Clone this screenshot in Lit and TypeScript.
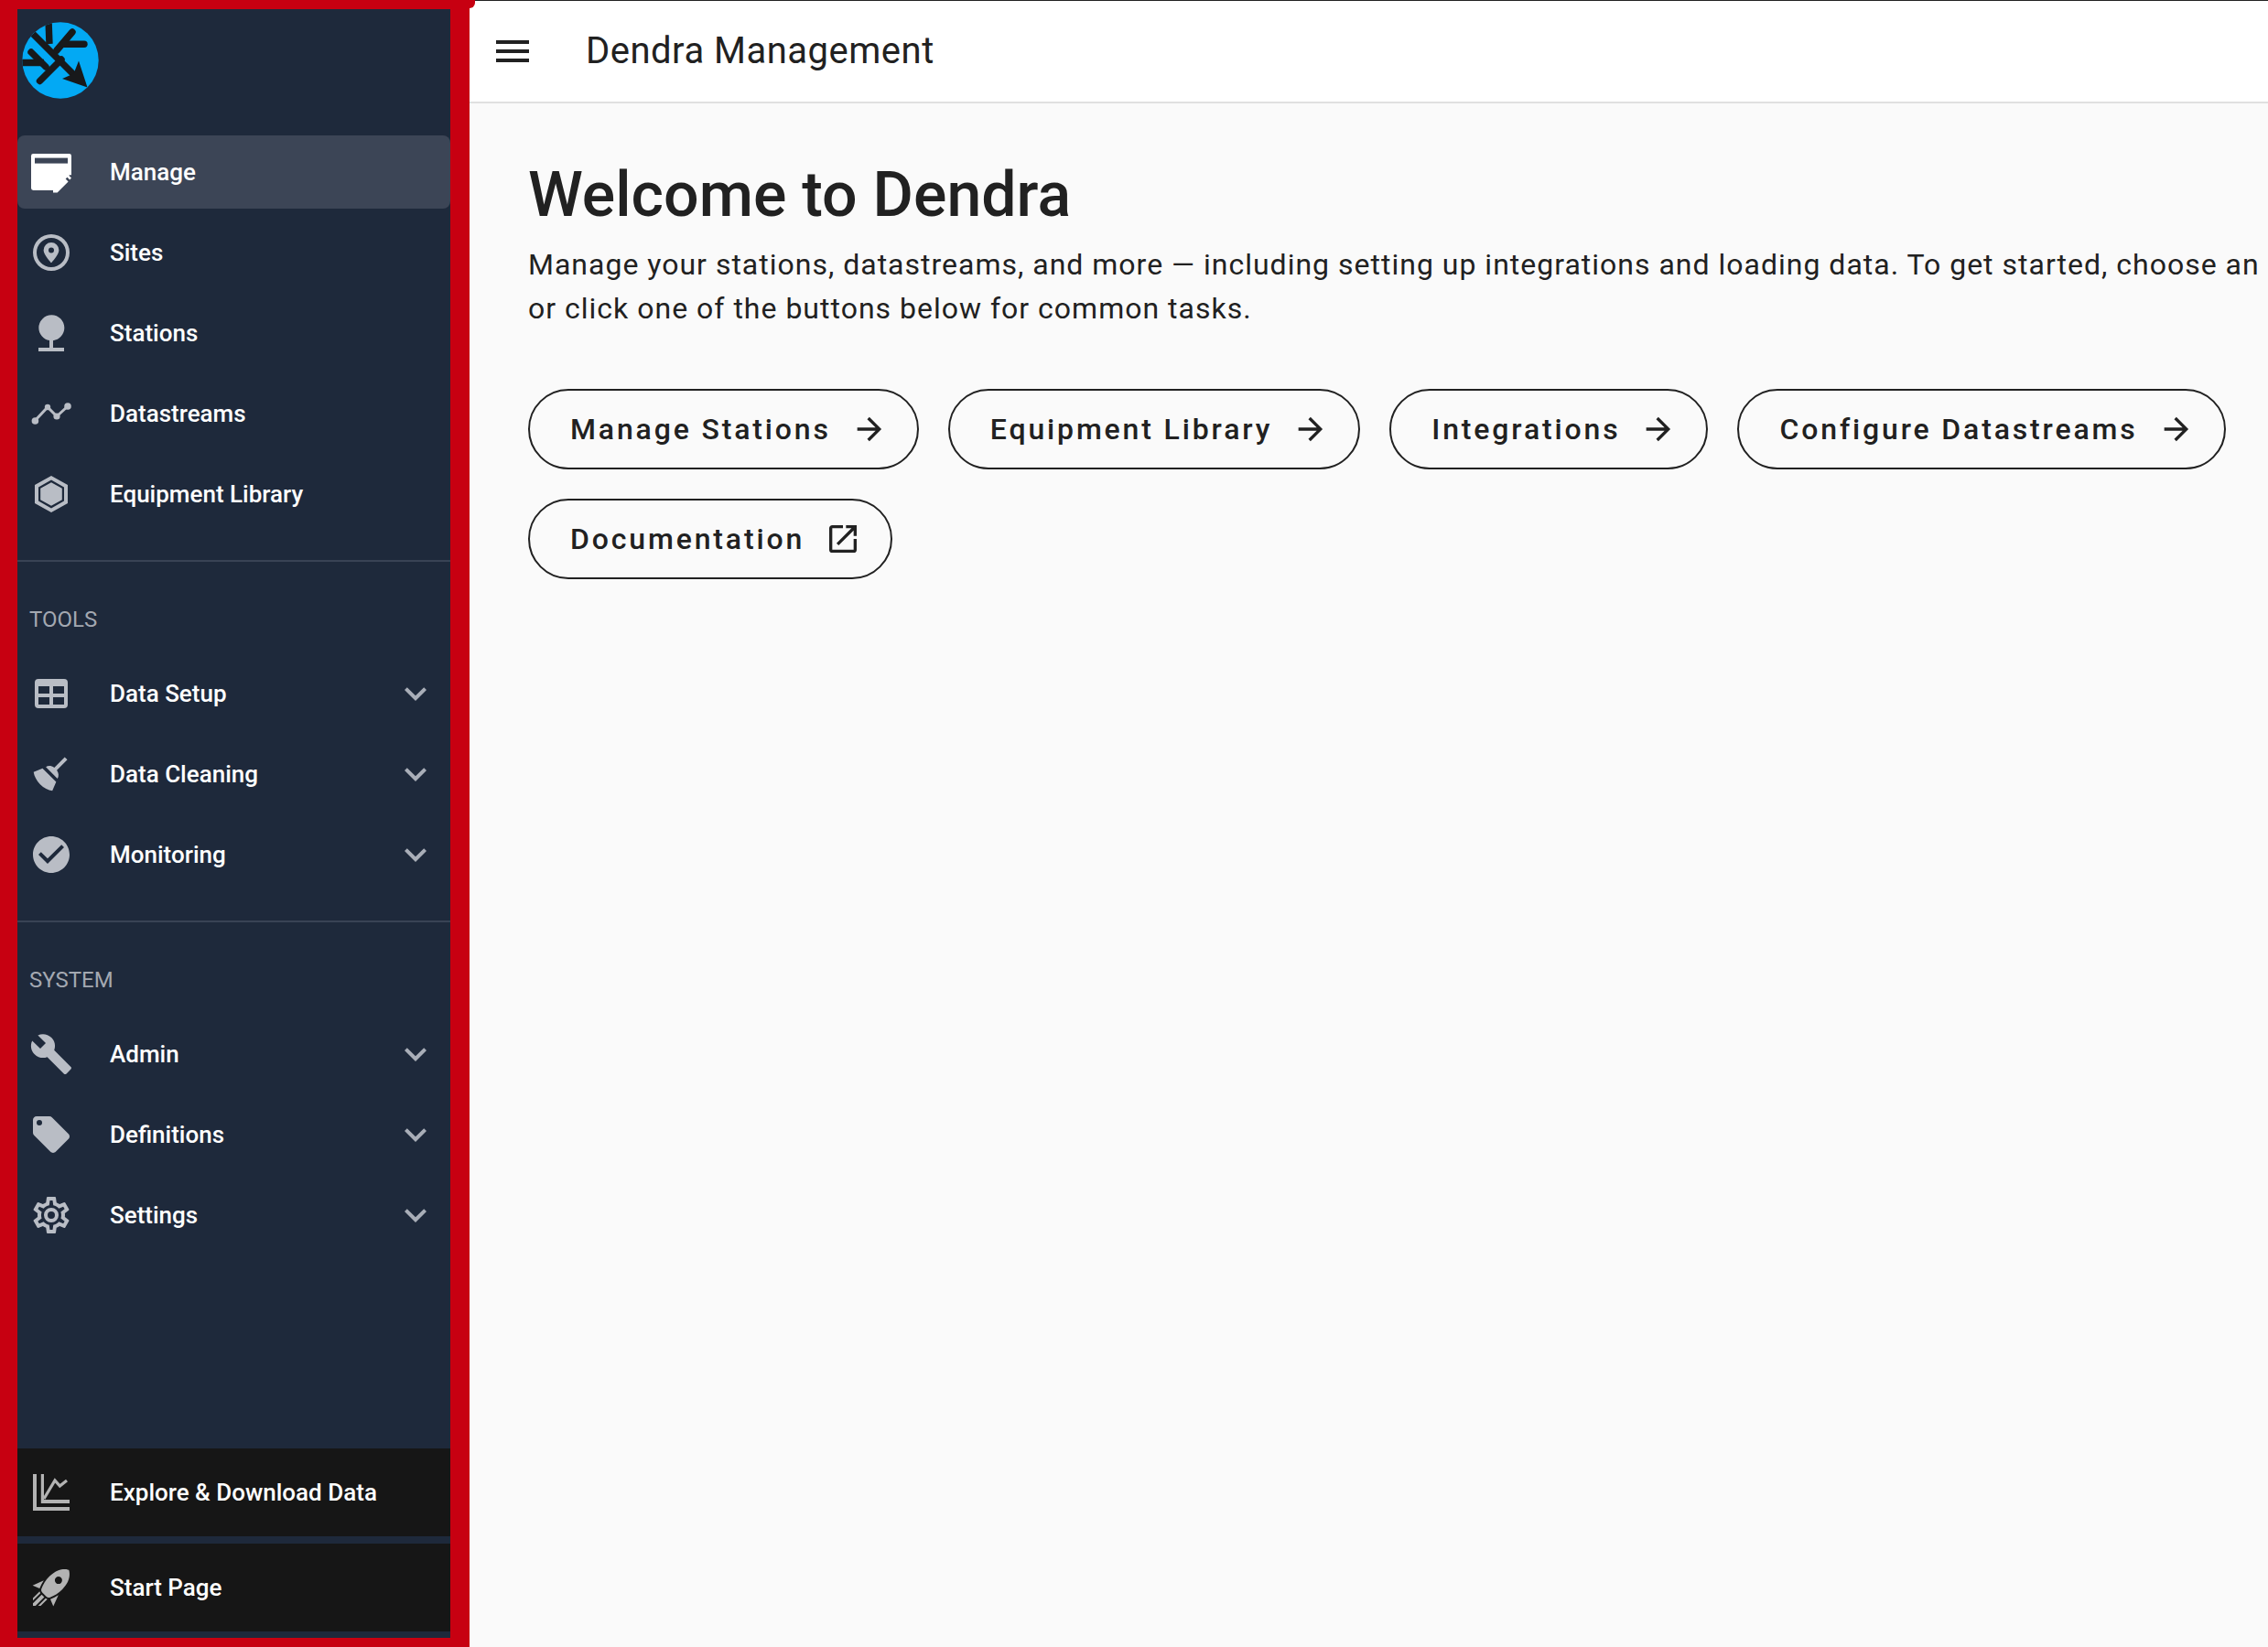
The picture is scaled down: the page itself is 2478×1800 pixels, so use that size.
import { LitElement, html, css, svg } from "lit";
import { customElement } from "lit/decorators.js";

const P = {
  menu: "M3,6H21V8H3V6M3,11H21V13H3V11M3,16H21V18H3V16Z",
  arrow: "M4,11V13H16L10.5,18.5L11.92,19.92L19.84,12L11.92,4.08L10.5,5.5L16,11H4Z",
  ext: "M14,3V5H17.59L7.76,14.83L9.17,16.24L19,6.41V10H21V3M19,19H5V5H12V3H5C3.89,3 3,3.9 3,5V19A2,2 0 0,0 5,21H19A2,2 0 0,0 21,19V12H19V19Z",
  chev: "M7.41,8.58L12,13.17L16.59,8.58L18,10L12,16L6,10L7.41,8.58Z",
  sites: "M12,2A10,10 0 0,1 22,12A10,10 0 0,1 12,22A10,10 0 0,1 2,12A10,10 0 0,1 12,2M12,4A8,8 0 0,0 4,12A8,8 0 0,0 12,20A8,8 0 0,0 20,12A8,8 0 0,0 12,4M12,6.5A4.2,4.2 0 0,1 16.2,10.7C16.2,13.2 12,17.6 12,17.6C12,17.6 7.8,13.2 7.8,10.7A4.2,4.2 0 0,1 12,6.5M12,9.2A1.5,1.5 0 0,0 10.5,10.7A1.5,1.5 0 0,0 12,12.2A1.5,1.5 0 0,0 13.5,10.7A1.5,1.5 0 0,0 12,9.2Z",
  stations: "M13 16.12C16.47 15.71 19.17 12.76 19.17 9.17C19.17 5.3 16.04 2.17 12.17 2.17A7 7 0 0 0 5.17 9.17C5.17 12.64 7.69 15.5 11 16.06V20H5V22H19V20H13V16.12Z",
  hex: "M12,2L21,7V17L12,22L3,17V7L12,2M12,4.3L5,8.2V15.8L12,19.7L19,15.8V8.2L12,4.3M12,5.6L17.9,8.9V15.1L12,18.4L6.1,15.1V8.9L12,5.6Z",
  table: "M5,4H19A2,2 0 0,1 21,6V18A2,2 0 0,1 19,20H5A2,2 0 0,1 3,18V6A2,2 0 0,1 5,4M5,8V12H11V8H5M13,8V12H19V8H13M5,14V18H11V14H5M13,14V18H19V14H13Z",
  broom: "M19.36,2.72L20.78,4.14L15.06,9.85C16.13,11.39 16.28,13.24 15.38,14.44L9.06,8.12C10.26,7.22 12.11,7.37 13.65,8.44L19.36,2.72M5.93,17.57C3.92,15.56 2.69,13.16 2.35,10.92L7.23,8.83L14.67,16.27L12.58,21.15C10.34,20.81 7.94,19.58 5.93,17.57Z",
  check: "M12 2C6.5 2 2 6.5 2 12S6.5 22 12 22 22 17.5 22 12 17.5 2 12 2M10 17L5 12L6.41 10.59L10 14.17L17.59 6.58L19 8L10 17Z",
  wrench: "M22.7,19L13.6,9.9C14.5,7.6 14,4.9 12.1,3C10.1,1 7.1,0.6 4.7,1.7L9,6L6,9L1.6,4.7C0.4,7.1 0.9,10.1 2.9,12.1C4.8,14 7.5,14.5 9.8,13.6L18.9,22.7C19.3,23.1 19.9,23.1 20.3,22.7L22.6,20.4C23.1,20 23.1,19.3 22.7,19Z",
  tag: "M5.5,7A1.5,1.5 0 0,1 4,5.5A1.5,1.5 0 0,1 5.5,4A1.5,1.5 0 0,1 7,5.5A1.5,1.5 0 0,1 5.5,7M21.41,11.58L12.41,2.58C12.05,2.22 11.55,2 11,2H4C2.89,2 2,2.89 2,4V11C2,11.55 2.22,12.05 2.59,12.41L11.58,21.41C11.95,21.77 12.45,22 13,22C13.55,22 14.05,21.77 14.41,21.41L21.41,14.41C21.78,14.05 22,13.55 22,13C22,12.44 21.77,11.94 21.41,11.58Z",
  cog: "M12,8A4,4 0 0,1 16,12A4,4 0 0,1 12,16A4,4 0 0,1 8,12A4,4 0 0,1 12,8M12,10A2,2 0 0,0 10,12A2,2 0 0,0 12,14A2,2 0 0,0 14,12A2,2 0 0,0 12,10M10,22C9.75,22 9.54,21.82 9.5,21.58L9.13,18.93C8.5,18.68 7.96,18.34 7.44,17.94L4.95,18.95C4.73,19.03 4.46,18.95 4.34,18.73L2.34,15.27C2.21,15.05 2.27,14.78 2.46,14.63L4.57,12.97L4.5,12L4.57,11L2.46,9.37C2.27,9.22 2.21,8.95 2.34,8.73L4.34,5.27C4.46,5.05 4.73,4.96 4.95,5.05L7.44,6.05C7.96,5.66 8.5,5.32 9.13,5.07L9.5,2.42C9.54,2.18 9.75,2 10,2H14C14.25,2 14.46,2.18 14.5,2.42L14.87,5.07C15.5,5.32 16.04,5.66 16.56,6.05L19.05,5.05C19.27,4.96 19.54,5.05 19.66,5.27L21.66,8.73C21.79,8.95 21.73,9.22 21.54,9.37L19.43,11L19.5,12L19.43,13L21.54,14.63C21.73,14.78 21.79,15.05 21.66,15.27L19.66,18.73C19.54,18.95 19.27,19.04 19.05,18.95L16.56,17.95C16.04,18.34 15.5,18.68 14.87,18.93L14.5,21.58C14.46,21.82 14.25,22 14,22H10M11.25,4L10.88,6.61C9.68,6.86 8.62,7.5 7.85,8.39L5.44,7.35L4.69,8.65L6.8,10.2C6.4,11.37 6.4,12.64 6.8,13.8L4.68,15.36L5.43,16.66L7.86,15.62C8.63,16.5 9.68,17.14 10.87,17.38L11.24,20H12.76L13.13,17.39C14.32,17.14 15.37,16.5 16.14,15.62L18.57,16.66L19.32,15.36L17.2,13.81C17.6,12.64 17.6,11.37 17.2,10.2L19.31,8.65L18.56,7.35L16.15,8.39C15.38,7.5 14.32,6.86 13.12,6.62L12.75,4H11.25Z",
  rocket: "M13.13 22.19L11.5 18.36C13.07 17.78 14.54 17 15.9 16.09L13.13 22.19M5.64 12.5L1.81 10.87L7.91 8.1C7 9.46 6.22 10.93 5.64 12.5M21.61 2.39C21.61 2.39 16.66 .269 11 5.93C8.81 8.12 7.5 10.53 6.65 12.64C6.37 13.39 6.56 14.21 7.11 14.77L9.24 16.89C9.79 17.45 10.61 17.63 11.36 17.35C13.5 16.53 15.88 15.19 18.07 13C23.73 7.34 21.61 2.39 21.61 2.39M14.54 9.46C13.76 8.68 13.76 7.41 14.54 6.63S16.59 5.85 17.37 6.63C18.14 7.41 18.15 8.68 17.37 9.46C16.59 10.24 15.32 10.24 14.54 9.46M6.24 22L9.88 18.36C9.54 18.27 9.21 18.12 8.91 17.91L4.83 22H6.24M2 22H3.41L8.18 17.24L6.76 15.83L2 20.59V22M2 19.17L6.09 15.09C5.88 14.79 5.73 14.47 5.64 14.12L2 17.76V19.17Z",
  explore: "M2,2H4V20H22V22H2ZM6.4,2H8V16H22V18H6.4Z",
};

const icon = (d: string) => html`<svg class="ic" viewBox="0 0 24 24"><path d=${d}></path></svg>`;

const manageIcon = html`<svg class="ic" viewBox="0 0 24 24">
  <rect x="1" y="2" width="22" height="20" rx="1.2" fill="#fff"></rect>
  <rect x="3" y="4.3" width="18" height="3" fill="#3c4556"></rect>
  <path d="M11.5,24L22,13.6H24V24Z" fill="#3c4556"></path>
  <path d="M13,23.2V20.9L19,14.9L21.3,17.2L15.3,23.2ZM19.9,14L20.8,13.1L23,15.3L22.1,16.2Z" fill="#fff"></path>
</svg>`;

const streamIcon = html`<svg class="ic" viewBox="0 0 24 24">
  <polyline points="3,16 10,8.5 15,13.5 21,8" fill="none" stroke="currentColor" stroke-width="1.5"></polyline>
  <circle cx="3.2" cy="16" r="1.9"></circle><circle cx="10" cy="8.5" r="1.6"></circle>
  <circle cx="15" cy="13.5" r="1.8"></circle><circle cx="21" cy="8" r="1.9"></circle>
</svg>`;

const exploreIcon = html`<svg class="ic" viewBox="0 0 24 24">
  <path d=${P.explore}></path>
  <polyline points="8,15.5 14,5.5 16.7,8.5 20.5,5.5" fill="none" stroke="currentColor" stroke-width="1.6"></polyline>
</svg>`;

const logo = html`<svg class="logo" viewBox="0 0 84 84">
  <defs><clipPath id="lc"><circle cx="42" cy="42" r="41.7"></circle></clipPath></defs>
  <circle cx="42" cy="42" r="41.7" fill="#03a9f4"></circle>
  <g clip-path="url(#lc)" stroke="#18191b" stroke-width="7.4" stroke-linecap="round" fill="none">
    <path stroke-linecap="butt" d="M12,13L57,58"></path>
    <path stroke-linecap="butt" d="M29,-2L30,24"></path>
    <path d="M55,11L38,31"></path>
    <path d="M68,24.3H46"></path>
    <path d="M19.5,64.5L43,41"></path>
    <path d="M10,33L26,49"></path>
    <path stroke-linecap="butt" d="M-2,44.5H24"></path>
  </g>
  <path clip-path="url(#lc)" d="M71.5,71.5L62,42.5L56.5,56.5L44,62Z" fill="#18191b"></path>
</svg>`;

type Item = { label: string; ic: unknown; more?: boolean; active?: boolean };

const top: Item[] = [
  { label: "Manage", ic: manageIcon, active: true },
  { label: "Sites", ic: icon(P.sites) },
  { label: "Stations", ic: icon(P.stations) },
  { label: "Datastreams", ic: streamIcon },
  { label: "Equipment Library", ic: icon(P.hex) },
];
const tools: Item[] = [
  { label: "Data Setup", ic: icon(P.table), more: true },
  { label: "Data Cleaning", ic: icon(P.broom), more: true },
  { label: "Monitoring", ic: icon(P.check), more: true },
];
const system: Item[] = [
  { label: "Admin", ic: icon(P.wrench), more: true },
  { label: "Definitions", ic: icon(P.tag), more: true },
  { label: "Settings", ic: icon(P.cog), more: true },
];
const foot: Item[] = [
  { label: "Explore & Download Data", ic: exploreIcon },
  { label: "Start Page", ic: icon(P.rocket) },
];
const buttons = [
  { label: "Manage Stations", d: P.arrow },
  { label: "Equipment Library", d: P.arrow },
  { label: "Integrations", d: P.arrow },
  { label: "Configure Datastreams", d: P.arrow },
  { label: "Documentation", d: P.ext },
];

@customElement("app-root")
export class AppRoot extends LitElement {
  static styles = css`
    :host {
      display: grid;
      grid-template-columns: 513px 1fr;
      width: 2478px;
      height: 1800px;
      overflow: hidden;
      font-family: Roboto, "Noto Sans", sans-serif;
      color: #212121;
      background: #fafafa;
    }
    aside {
      position: relative;
      box-sizing: border-box;
      height: 1800px;
      border-style: solid;
      border-color: #c70011;
      border-width: 10px 21px 10px 19px;
      background: #1e293b;
      display: flex;
      flex-direction: column;
      color: #fff;
    }
    .nub {
      position: absolute;
      left: calc(100% + 21px);
      top: -10px;
      width: 6px;
      height: 9px;
      background: #c70011;
      border-bottom-right-radius: 6px;
    }
    .brand { height: 138px; padding: 14px 0 0 5px; box-sizing: border-box; flex: none; }
    .logo { display: block; width: 84px; height: 84px; }
    .list { display: flex; flex-direction: column; gap: 8px; flex: none; }
    .row {
      height: 80px;
      display: flex;
      align-items: center;
      padding: 0 14px 0 13px;
      font-size: 26px;
      font-weight: 500;
      letter-spacing: 0;
      flex: none;
    }
    .row.active { background: #3c4556; border-radius: 8px; }
    .row .label { flex: 1; margin-left: 40px; white-space: nowrap; }
    .ic { display: block; width: 48px; height: 48px; fill: currentColor; flex: none; color: #b9bdc5; }
    .chev { color: #a9aeb8; }
    .divider { height: 2px; margin-top: 32px; background: #394355; flex: none; }
    .sub {
      margin: 48px 0 26px;
      padding-left: 13px;
      font-size: 24px;
      line-height: 30px;
      font-weight: 400;
      color: #a3a8b1;
      flex: none;
    }
    .foot { margin-top: auto; padding-bottom: 7px; display: flex; flex-direction: column; gap: 8px; }
    .foot .row { height: 96px; background: #161616; }
    .foot .ic { color: #b3b3b3; }
    .main { border-top: 1px solid #222; display: flex; flex-direction: column; min-width: 0; }
    header {
      height: 112px;
      box-sizing: border-box;
      background: #fff;
      border-bottom: 2px solid #e0e0e0;
      display: flex;
      align-items: center;
      padding-left: 23px;
      flex: none;
    }
    header .ic { color: #212121; }
    header h2 { margin: 0 0 0 56px; font-size: 40px; font-weight: 400; letter-spacing: 0.5px; line-height: 48px; }
    .content { padding: 64px 0 0 64px; }
    h1 { margin: 0; font-size: 68px; font-weight: 500; line-height: 72px; letter-spacing: 0; }
    p { margin: 16px 0 0; font-size: 32px; line-height: 48px; letter-spacing: 1px; white-space: nowrap; }
    .btns { display: flex; flex-wrap: wrap; gap: 32px; margin-top: 64px; width: 1880px; }
    .btn {
      box-sizing: border-box;
      height: 88px;
      border: 2px solid #212121;
      border-radius: 44px;
      display: flex;
      align-items: center;
      padding: 0 32px 0 44px;
      font-size: 32px;
      font-weight: 500;
      letter-spacing: 2.85px;
      white-space: nowrap;
    }
    .btn .ic { width: 40px; height: 40px; margin-left: 22px; color: #212121; }
  `;

  private row(i: Item) {
    return html`<div class="row ${i.active ? "active" : ""}">
      ${i.ic}
      <span class="label">${i.label}</span>
      ${i.more ? html`<svg class="ic chev" viewBox="0 0 24 24"><path d=${P.chev}></path></svg>` : ""}
    </div>`;
  }

  render() {
    return html`
      <aside>
        <span class="nub"></span>
        <div class="brand">${logo}</div>
        <div class="list">${top.map((i) => this.row(i))}</div>
        <div class="divider"></div>
        <div class="sub">TOOLS</div>
        <div class="list">${tools.map((i) => this.row(i))}</div>
        <div class="divider"></div>
        <div class="sub">SYSTEM</div>
        <div class="list">${system.map((i) => this.row(i))}</div>
        <div class="foot">${foot.map((i) => this.row(i))}</div>
      </aside>
      <div class="main">
        <header>
          ${icon(P.menu)}
          <h2>Dendra Management</h2>
        </header>
        <div class="content">
          <h1>Welcome to Dendra</h1>
          <p>Manage your stations, datastreams, and more — including setting up integrations and loading data. To get started, choose an<br />or click one of the buttons below for common tasks.</p>
          <div class="btns">
            ${buttons.map((b) => html`<div class="btn">${b.label}${icon(b.d)}</div>`)}
          </div>
        </div>
      </div>
    `;
  }
}
